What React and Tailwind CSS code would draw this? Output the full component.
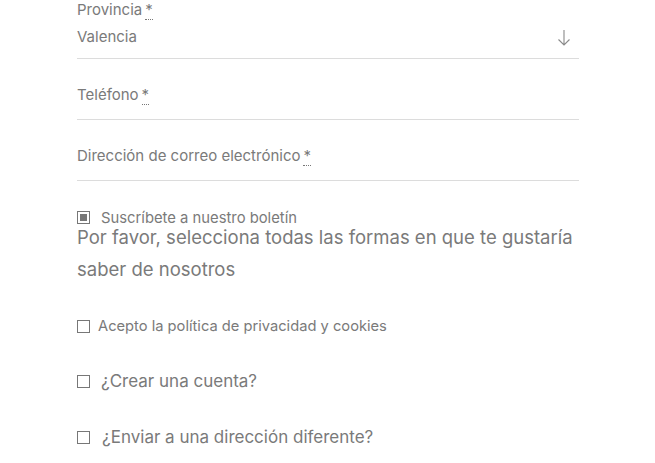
import { useState } from 'react'

function Req() {
  return (
    <abbr title="obligatorio" className="no-underline border-b border-dotted border-[#777] leading-none">*</abbr>
  )
}

function Box({ checked, onToggle, className = '' }) {
  return (
    <button
      type="button"
      onClick={onToggle}
      className={`w-[13px] h-[13px] border border-[#777] bg-white flex items-center justify-center shrink-0 ${className}`}
    >
      {checked && <span className="w-[7px] h-[7px] bg-[#777]" />}
    </button>
  )
}

function Field({ label, children, className = '' }) {
  return (
    <div className={`border-b border-[#dcdcdc] ${className}`}>
      <label className="block text-[15px] leading-[20px]">
        {label}<span className="ml-[3px]"><Req /></span>
      </label>
      {children}
    </div>
  )
}

export default function App() {
  const [news, setNews] = useState(true)
  const [privacy, setPrivacy] = useState(false)
  const [account, setAccount] = useState(false)
  const [ship, setShip] = useState(false)

  return (
    <div className="min-h-[463px] bg-white text-[#7a7a7a] font-['Inter','Liberation_Sans',sans-serif]">
      <div className="w-[502px] ml-[77px]">
        {/* Provincia */}
        <Field label="Provincia" className="h-[59px]">
          <div className="flex items-center justify-between mt-[7px] pr-[8px]">
            <span className="text-[15px] leading-[20px]">Valencia</span>
            <svg width="14" height="17" viewBox="0 0 14 17" fill="none" stroke="#8a8a8a" strokeWidth="1.1">
              <path d="M7 1v15M1.5 10.5L7 16l5.5-5.5" />
            </svg>
          </div>
        </Field>

        <Field label="Teléfono" className="h-[61px] pt-[26px]" />
        <Field label="Dirección de correo electrónico" className="h-[61px] pt-[26px]" />

        {/* Boletín */}
        <div className="flex items-center gap-[11px] mt-[30px]">
          <Box checked={news} onToggle={() => setNews(v => !v)} />
          <span className="text-[14.8px] leading-[8px]">Suscríbete a nuestro boletín</span>
        </div>
        <p className="text-[18.5px] leading-[32px] mt-[-3px]">
          Por favor, selecciona todas las formas en que te gustaría saber de nosotros
        </p>

        {/* Privacidad */}
        <div className="flex items-center gap-[8px] mt-[32px]">
          <Box checked={privacy} onToggle={() => setPrivacy(v => !v)} />
          <span className="text-[14.7px] leading-[18px]">Acepto la política de privacidad y cookies</span>
        </div>

        <div className="flex items-center gap-[11px] mt-[36px]">
          <Box checked={account} onToggle={() => setAccount(v => !v)} />
          <span className="text-[17px] leading-[20px]">¿Crear una cuenta?</span>
        </div>

        <div className="flex items-center gap-[12px] mt-[36px]">
          <Box checked={ship} onToggle={() => setShip(v => !v)} />
          <span className="text-[17px] leading-[20px]">¿Enviar a una dirección diferente?</span>
        </div>
      </div>
    </div>
  )
}
